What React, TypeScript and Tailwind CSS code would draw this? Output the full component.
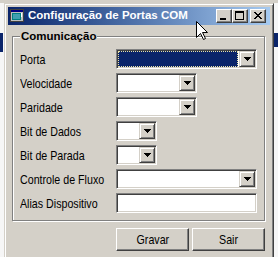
import React from "react";

const sunken =
  "border border-t-[#808080] border-l-[#808080] border-r-white border-b-white shadow-[inset_1px_1px_0_#404040,inset_-1px_-1px_0_#d4d0c8]";
const raised =
  "border border-t-[#d4d0c8] border-l-[#d4d0c8] border-r-[#404040] border-b-[#404040] shadow-[inset_1px_1px_0_#ffffff,inset_-1px_-1px_0_#808080]";
const push =
  "border border-t-white border-l-white border-r-[#404040] border-b-[#404040] shadow-[inset_-1px_-1px_0_#808080]";

function Arrow() {
  return (
    <svg width="7" height="4" viewBox="0 0 7 4">
      <path d="M0 0h7v1h-1v1h-1v1h-1v1h-1v-1h-1v-1h-1v-1h-1z" fill="#000" />
    </svg>
  );
}

function Combo({ w, selected }: { w: string; selected?: boolean }) {
  return (
    <div className={`${w} h-[20px] bg-white flex ${sunken}`}>
      <div className="flex-1 flex p-[1px]">
        {selected && (
          <div className="flex-1 bg-[#0a246a] border border-dotted border-[#e9e2a8]" />
        )}
      </div>
      <div className={`w-[16px] h-[16px] mt-[1px] mr-[1px] bg-[#d4d0c8] flex items-center justify-center ${raised}`}>
        <Arrow />
      </div>
    </div>
  );
}

function Label({ children }: { children: React.ReactNode }) {
  return (
    <div className="h-[20px] flex items-center text-black">
      <span className="inline-block whitespace-nowrap scale-x-[0.82] origin-left">{children}</span>
    </div>
  );
}

export default function App() {
  return (
    <div
      className="relative w-[278px] h-[257px] overflow-hidden bg-[#f6f6f6] pl-[4px] pt-[3px] text-[13px] leading-none"
      style={{ fontFamily: '"Liberation Sans", Arial, sans-serif' }}
    >
      <div className="absolute left-0 top-0 w-full h-[3px] bg-[#d4d0c8]" />
      <div className="absolute left-0 top-[33px] w-[3px] h-[19px] bg-[#0a246a]" />
      <div className="absolute right-0 top-[33px] w-[4px] h-[14px] bg-[#0a246a]" />

      <div className="relative w-[270px] h-[262px] bg-[#d4d0c8] border border-t-[#d4d0c8] border-l-[#d4d0c8] border-r-[#404040] border-b-[#404040] shadow-[inset_1px_1px_0_#ffffff,inset_-1px_-1px_0_#808080] p-[3px] flex flex-col">
        {/* title bar */}
        <div className="h-[18px] flex items-center pl-[2px] bg-linear-to-r from-[#0a246a] to-[#a6caf0]">
          <svg width="16" height="14" viewBox="0 0 16 14" className="shrink-0">
            <rect x="0.5" y="0.5" width="13" height="12" fill="#c0c0c0" stroke="#404040" />
            <rect x="1" y="1" width="12" height="2" fill="#000080" />
            <rect x="2" y="4" width="9" height="7" fill="#008080" />
            <rect x="3" y="5" width="7" height="5" fill="#40a0b0" />
            <rect x="11" y="4" width="1" height="4" fill="#ffffff" />
          </svg>
          <span className="ml-[2px] text-white font-bold text-[11.5px] leading-none whitespace-nowrap">
            Configuração de Portas COM
          </span>
          <div className="ml-auto flex pr-[4px]">
            <div className={`w-[16px] h-[14px] bg-[#d4d0c8] flex ${push}`}>
              <div className="mt-[8px] ml-[3px] w-[6px] h-[2px] bg-black" />
            </div>
            <div className={`w-[16px] h-[14px] bg-[#d4d0c8] flex ${push}`}>
              <div className="mt-[1px] ml-[2px] w-[9px] h-[9px] border border-black border-t-2" />
            </div>
            <div className={`ml-[2px] w-[16px] h-[14px] bg-[#d4d0c8] flex items-center justify-center ${push}`}>
              <svg width="8" height="7" viewBox="0 0 8 7" className="mb-[1px]">
                <path
                  d="M0 0h2v1h1v1h2v-1h1v-1h2v1h-1v1h-1v1h-1v1h1v1h1v1h1v1h-2v-1h-1v-1h-2v1h-1v1h-2v-1h1v-1h1v-1h1v-1h-1v-1h-1v-1h-1z"
                  fill="#000"
                />
              </svg>
            </div>
          </div>
        </div>

        {/* client */}
        <div className="flex flex-col px-[4px]">
          <div className="relative mt-[11px] w-[253px] h-[185px] border border-[#808080] shadow-[inset_1px_1px_0_#ffffff,1px_1px_0_#ffffff] pt-[12px] pl-[7px]">
            <div className="absolute left-[7px] top-[-8px] px-[1px] bg-[#d4d0c8] font-bold text-[11.5px] leading-[14px] text-black">
              Comunicação
            </div>
            <div className="grid grid-cols-[96px_141px] gap-y-[4px]">
              <Label>Porta</Label>
              <Combo w="w-[141px]" selected />
              <Label>Velocidade</Label>
              <Combo w="w-[81px]" />
              <Label>Paridade</Label>
              <Combo w="w-[81px]" />
              <Label>Bit de Dados</Label>
              <Combo w="w-[41px]" />
              <Label>Bit de Parada</Label>
              <Combo w="w-[41px]" />
              <Label>Controle de Fluxo</Label>
              <Combo w="w-[141px]" />
              <Label>Alias Dispositivo</Label>
              <div className={`w-[141px] h-[20px] bg-white ${sunken}`} />
            </div>
          </div>

          <div className="mt-[7px] flex justify-end gap-[3px] pr-[1px]">
            <button className={`w-[73px] h-[23px] bg-[#d4d0c8] text-black text-[13px] flex items-center justify-center ${push}`}>
              <span className="inline-block scale-x-[0.82]">Gravar</span>
            </button>
            <button className={`w-[73px] h-[23px] bg-[#d4d0c8] text-black text-[13px] flex items-center justify-center ${push}`}>
              <span className="inline-block scale-x-[0.82]">Sair</span>
            </button>
          </div>
        </div>
      </div>

      {/* mouse cursor */}
      <svg className="absolute left-[196px] top-[21px]" width="13" height="20" viewBox="0 0 13 20">
        <path d="M0.5 0.5V16.5L4.5 12.5L7.5 18.5L9.5 17.5L6.5 11.5H11.5Z" fill="#fff" stroke="#000" strokeLinejoin="miter" />
      </svg>
    </div>
  );
}
